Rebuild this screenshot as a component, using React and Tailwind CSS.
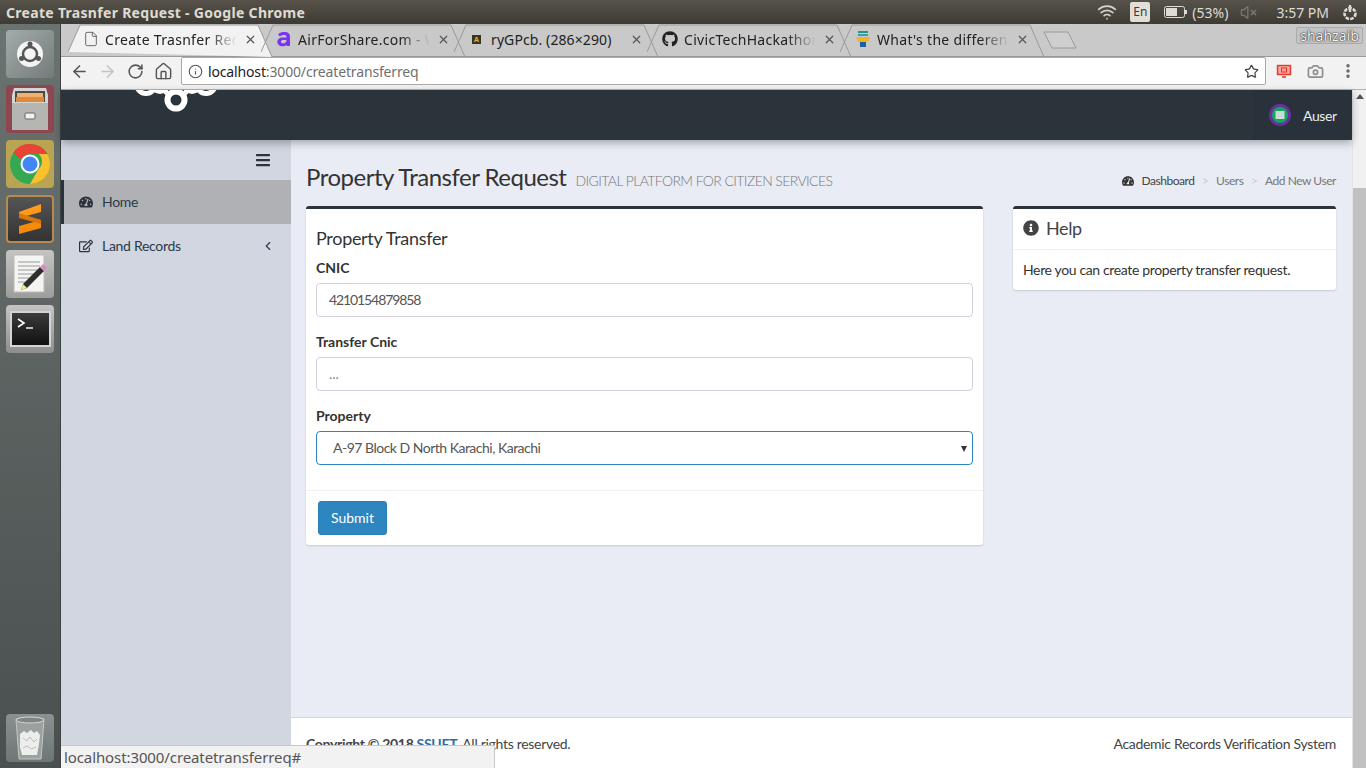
import React from 'react'
import { ArrowLeft, ArrowRight, RotateCw, Home, Info, Star, X, File, Camera, MoreVertical, Wifi, VolumeX, ChevronLeft } from 'lucide-react'
import { FaTachometerAlt, FaRegEdit, FaBars, FaInfoCircle, FaGithub } from 'react-icons/fa'

const TABS = [
  { title: 'Create Trasnfer Request', active: true, icon: 'file' },
  { title: 'AirForShare.com - Wifi', icon: 'air' },
  { title: 'ryGPcb. (286×290)', icon: 'img', full: true },
  { title: 'CivicTechHackathon', icon: 'github' },
  { title: "What's the difference", icon: 'stack' },
]

function TabIcon({ type }) {
  if (type === 'file') return <File size={16} strokeWidth={1.3} className="text-[#555]" />
  if (type === 'air') {
    return (
      <svg width="16" height="16" viewBox="0 0 16 16">
        <path d="M2 3.5C3.5 1.5 6 1 9 1c3 0 5 1.5 5 4.5V15h-3.6v-1.2C9.4 14.8 8 15.3 6.5 15.3 3.5 15.3 1.300 13.500 1.300 10.800 1.300 8 3.600 6.400 6.800 6.400h3.600V5.800c0-1.200-.8-1.800-2.200-1.800-1.500 0-3 .5-4.200 1.400zM10.400 9H7.200c-1.300 0-2.200.6-2.200 1.700 0 1 .8 1.700 2.100 1.700 1.500 0 2.600-.7 3.300-1.800z" fill="#7a35f0" />
      </svg>
    )
  }
  if (type === 'img') return <span className="ml-[3px] flex h-[9px] w-[9px] items-center justify-center bg-[#3a3520] text-[7px] leading-none font-bold text-[#e8b030]">A</span>
  if (type === 'github') return <FaGithub size={16} className="text-[#222]" />
  return (
    <svg width="16" height="18" viewBox="0 0 16 18">
      <rect x="3" y="1" width="10" height="2" fill="#2f8f8f" />
      <rect x="3" y="4" width="10" height="2" fill="#3aa0a0" />
      <path d="M1 7h14l-2 5H3z" fill="#f0b429" />
      <rect x="5" y="12" width="6" height="5" fill="#1f5f9f" />
    </svg>
  )
}

function Tab({ title, active, icon, full }) {
  return (
    <div className="relative h-full w-[193px] shrink-0">
      <svg className="absolute top-0 left-0" width="206" height="33" viewBox="0 0 206 33">
        <path
          d="M0 28 L12 1 H190 L204 33"
          fill={active ? '#f2f2f2' : 'none'}
          stroke="#9a9a9a"
          strokeWidth="1"
        />
      </svg>
      <div className="absolute top-0 left-[15px] flex h-[30px] w-[174px] items-center">
        <span className="flex w-[20px] shrink-0 justify-start"><TabIcon type={icon} /></span>
        <span
          className={
            full
              ? 'ml-[2px] w-[126px] overflow-hidden text-[14px] tracking-[0.1px] whitespace-nowrap text-[#222]'
              : 'ml-[2px] w-[132px] overflow-hidden text-[14px] tracking-[0.3px] whitespace-nowrap text-[#222] [mask-image:linear-gradient(to_right,black_78%,transparent)]'
          }
        >
          {title}
        </span>
        <X size={13} strokeWidth={2.2} className="ml-auto shrink-0 text-[#555]" />
      </div>
    </div>
  )
}

function TopBar() {
  return (
    <div className="flex h-6 shrink-0 items-center bg-gradient-to-b from-[#57534a] to-[#3d3b35] pr-[8px] pl-[6px] font-['Noto_Sans',sans-serif] text-[#dfdbd2]">
      <span className="text-[14px] font-bold tracking-[0.3px] whitespace-nowrap">Create Trasnfer Request - Google Chrome</span>
      <div className="ml-auto flex items-center">
        <Wifi size={20} strokeWidth={2} className="text-[#d8d4cb]" />
        <span className="ml-[13px] flex h-[20px] w-[20px] items-center justify-center rounded-[2px] bg-[#e2dfd8] text-[12px] text-[#3c3b37]">En</span>
        <svg className="ml-[14px]" width="24" height="12" viewBox="0 0 24 12">
          <rect x="0.5" y="0.500" width="20" height="11" rx="2" fill="none" stroke="#dfdbd2" />
          <rect x="2" y="2" width="11" height="8" fill="#dfdbd2" />
          <rect x="21" y="4" width="2" height="4" fill="#dfdbd2" />
        </svg>
        <span className="ml-[4px] text-[14px]">(53%)</span>
        <VolumeX size={17} className="ml-[12px] text-[#77756e]" />
        <span className="ml-[19px] text-[14px]">3:57 PM</span>
        <svg className="ml-[13px]" width="16" height="17" viewBox="0 0 16 17">
          <circle cx="8" cy="9.500" r="5.500" fill="none" stroke="#dfdbd2" strokeWidth="2.600" strokeDasharray="3.500 1.200" />
          <path d="M8 1v7" stroke="#dfdbd2" strokeWidth="2.400" />
        </svg>
      </div>
    </div>
  )
}

function DockTile({ className, children }) {
  return <div className={`flex h-12 w-12 shrink-0 items-center justify-center rounded-[4px] ${className}`}>{children}</div>
}

function Dock() {
  return (
    <div className="flex w-[61px] shrink-0 flex-col items-center gap-[7px] border-r border-[#3f4443] bg-gradient-to-b from-[#6b7371] to-[#4a504f] pt-[6px] pb-[6px]">
      <DockTile className="bg-gradient-to-br from-[#a4acab] to-[#737c7b]">
        <svg width="36" height="36" viewBox="0 0 36 36">
          <circle cx="18" cy="18" r="13" fill="#f4f4f4" />
          <circle cx="18" cy="18" r="7" fill="none" stroke="#555" strokeWidth="2.500" />
          <circle cx="18" cy="8" r="2.500" fill="#555" />
          <circle cx="9.500" cy="22.500" r="2.500" fill="#555" />
          <circle cx="26.500" cy="22.500" r="2.500" fill="#555" />
        </svg>
      </DockTile>
      <DockTile className="bg-[#8e4650]">
        <svg width="40" height="44" viewBox="0 0 40 44">
          <path d="M4 1H36L38 8V43H2V8z" fill="#d4d4d2" />
          <rect x="5" y="4" width="30" height="11" fill="#4a4a48" />
          <rect x="7" y="6" width="26" height="4" fill="#f0b070" />
          <rect x="6" y="10" width="28" height="5" fill="#e0883c" />
          <rect x="2" y="16" width="36" height="27" fill="#b5b5b2" />
          <rect x="15" y="26" width="10" height="6" rx="1" fill="#f2f2f2" stroke="#666" />
        </svg>
      </DockTile>
      <DockTile className="bg-[#b9a551]">
        <svg width="42" height="42" viewBox="0 0 42 42">
          <circle cx="21" cy="21" r="20" fill="#34a853" />
          <path d="M21 1a20 20 0 0 1 17.300 10H21a10 10 0 0 0-9 5.600L4.200 9.600A20 20 0 0 1 21 1z" fill="#ea4335" />
          <path d="M38.300 11A20 20 0 0 1 21 41l8.600-15A10 10 0 0 0 29.600 11z" fill="#fbc02d" />
          <circle cx="21" cy="21" r="9.500" fill="#fff" />
          <circle cx="21" cy="21" r="7.500" fill="#4285f4" />
        </svg>
      </DockTile>
      <DockTile className="border-2 border-[#b98a50] bg-gradient-to-b from-[#555] to-[#333]">
        <svg width="24" height="30" viewBox="0 0 24 30">
          <path d="M23 0v8L1 14V8z" fill="#ff9a1a" />
          <path d="M1 13l22 6v5L1 30v-8l22-6z" fill="#f58a0b" />
          <path d="M1 9l22 7v4L1 14z" fill="#d97708" />
        </svg>
      </DockTile>
      <DockTile className="bg-gradient-to-b from-[#c4c4c2] to-[#9d9d9b]">
        <svg width="38" height="40" viewBox="0 0 38 40">
          <rect x="3" y="1" width="30" height="37" fill="#f4f4f2" stroke="#bbb" />
          <path d="M7 8h22M7 12h22M7 16h20M7 20h16M7 24h13M7 28h12" stroke="#999" strokeWidth="1" />
          <path d="M12 30 L29 13 L33 17 L16 34 L10 36z" fill="#2e2e2e" />
          <path d="M29 13 L32 10 L36 14 L33 17z" fill="#d88ac4" />
          <path d="M12 30 L16 34 L10 36z" fill="#f2e88c" />
        </svg>
      </DockTile>
      <DockTile className="bg-gradient-to-b from-[#c4c4c2] to-[#8e8e8c]">
        <div className="flex h-[36px] w-[41px] items-start border-2 border-[#d4d4d4] bg-gradient-to-b from-[#3c3c3c] to-[#111] pt-[5px] pl-[5px]">
          <svg width="18" height="12" viewBox="0 0 18 12">
            <path d="M1 1l6 4-6 4" fill="none" stroke="#fff" strokeWidth="1.600" />
            <path d="M9 10h7" stroke="#fff" strokeWidth="1.400" />
          </svg>
        </div>
      </DockTile>
      <DockTile className="mt-auto bg-gradient-to-b from-[#8a9190] to-[#6e7675]">
        <svg width="32" height="44" viewBox="0 0 32 44">
          <path d="M2 3h28l-3 40H5z" fill="#9aa19f" stroke="#c4c8c6" />
          <ellipse cx="16" cy="4" rx="14" ry="3" fill="#7f8684" stroke="#d4d6d4" />
          <path d="M6 18l4-3 3 2 4-3 3 3 3-2 3 4-1 9-2 11H8L6 31z" fill="#eceeec" />
          <path d="M9 22l4 3 3-4 4 5 3-3M9 32l4-2 4 3 5-2" fill="none" stroke="#b8bcba" />
        </svg>
      </DockTile>
    </div>
  )
}

function Chrome() {
  return (
    <div className="shrink-0 font-['Noto_Sans',sans-serif]">
      <div className="relative flex h-[33px] bg-[#c9c9c9] pl-[7px]">
        <div className="absolute bottom-0 left-0 h-px w-full bg-[#9a9a9a]" />
        {TABS.map(t => <Tab key={t.icon} {...t} />)}
        <svg className="mt-[7px] ml-[10px]" width="36" height="18" viewBox="0 0 36 18">
          <path d="M1 1H25L33 17H9z" fill="#cfcfcf" stroke="#9a9a9a" />
        </svg>
        <div className="absolute top-[3px] right-[3px] flex h-[17px] w-[67px] items-center justify-center rounded-[2px] border border-[#aaa] bg-[#c4c4c4] text-[14px] leading-none text-[#f4f4f4] [text-shadow:0_0_1px_#000,0_0_2px_#333]">
          shahzaib
        </div>
      </div>
      <div className="flex h-[33px] items-center border-b border-[#b4b4b4] bg-[#f2f2f2] pb-[4px] pl-[9px]">
        <ArrowLeft size={19} strokeWidth={2} className="text-[#555]" />
        <ArrowRight size={19} strokeWidth={2} className="ml-[9px] text-[#c4c4c4]" />
        <RotateCw size={17} strokeWidth={2.200} className="ml-[10px] text-[#555]" />
        <Home size={19} strokeWidth={1.800} className="ml-[10px] text-[#555]" />
        <div className="ml-[8px] flex h-[28px] w-[1085px] items-center rounded-[2px] border border-[#a9a9a9] bg-white pr-[6px] pl-[6px]">
          <Info size={15} strokeWidth={1.800} className="text-[#555]" />
          <span className="ml-[5px] text-[14px] tracking-[-0.15px] text-[#222]">localhost<span className="text-[#6f6f6f]">:3000/createtransferreq</span></span>
          <Star size={15} strokeWidth={2} className="ml-auto text-[#444]" />
        </div>
        <svg className="ml-[10px]" width="16" height="16" viewBox="0 0 16 16">
          <rect x="1.500" y="2.500" width="13" height="9" fill="#f6a49c" stroke="#e5392c" strokeWidth="1.400" />
          <rect x="5.500" y="5" width="5" height="4" fill="none" stroke="#e5392c" />
          <path d="M6 14h4" stroke="#e5392c" strokeWidth="1.600" />
        </svg>
        <Camera size={17} strokeWidth={2.400} className="ml-[15px] text-[#8e8e8e]" />
        <MoreVertical size={18} strokeWidth={2.600} className="ml-[15px] text-[#666]" />
      </div>
    </div>
  )
}

function Header() {
  return (
    <div className="relative z-10 flex h-[50px] shrink-0 overflow-hidden bg-[#2b343b] shadow-[0_3px_8px_rgba(0,0,0,0.3)]">
      <svg className="absolute top-0 left-[72px]" width="88" height="26" viewBox="0 0 88 26">
        <g fill="none" stroke="#fff">
          <circle cx="43" cy="10" r="8.500" strokeWidth="6" />
          <path d="M36 5 L29 -2 M50 5 L57 -2" strokeWidth="5" />
          <circle cx="13" cy="-6" r="9.500" strokeWidth="5" />
          <circle cx="27" cy="-6" r="7.500" strokeWidth="5" />
          <circle cx="59" cy="-6" r="7.500" strokeWidth="5" />
          <circle cx="73" cy="-6" r="9.500" strokeWidth="5" />
        </g>
      </svg>
      <div className="ml-auto flex w-[99px] items-center bg-[#29323a] pl-[15px]">
        <svg width="24" height="24" viewBox="0 0 24 24">
          <circle cx="12" cy="12" r="11" fill="#6b2fa0" />
          <circle cx="12" cy="12" r="8" fill="#12a75a" />
          <rect x="7.500" y="8" width="9" height="8" fill="#c9dcd6" />
        </svg>
        <span className="ml-[11px] text-[14px] tracking-[-0.4px] text-[#e4edf3]">Auser</span>
      </div>
    </div>
  )
}

function Sidebar() {
  return (
    <div className="flex w-[230px] shrink-0 flex-col bg-[#d2d6e0] font-['Lato',sans-serif] text-[#2b3a4a]">
      <div className="flex h-[40px] items-center justify-end pr-[20px]">
        <FaBars size={16} className="text-[#2b343b]" />
      </div>
      <div className="flex h-[44px] items-center border-l-[3px] border-[#2b343b] bg-[#b0b1b5] pb-[1px] pl-[15px] text-[14px] tracking-[-0.3px]">
        <FaTachometerAlt size={14} className="text-[#2b343b]" />
        <span className="ml-[9px]">Home</span>
      </div>
      <div className="flex h-[44px] items-center pr-[16px] pb-[1px] pl-[18px] text-[14px] tracking-[-0.3px]">
        <FaRegEdit size={14} className="text-[#2b343b]" />
        <span className="ml-[9px]">Land Records</span>
        <ChevronLeft size={14} strokeWidth={2} className="ml-auto" />
      </div>
    </div>
  )
}

function Field({ label, value, placeholder, focus, valueClass }) {
  return (
    <div className="mb-[15px]">
      <div className="mb-[5px] text-[14px] leading-[20px] font-bold tracking-normal text-[#333]">{label}</div>
      <div
        className={
          focus
            ? 'relative flex h-[34px] items-center rounded-[4px] border border-[#2e86c1] bg-white pb-[1px] pl-[16px] text-[14px] text-[#555]'
            : 'relative flex h-[34px] items-center rounded-[4px] border border-[#d2d0dc] bg-white pb-[1px] pl-[12px] text-[14px] text-[#555]'
        }
      >
        {placeholder ? <span className="text-[#888]">{placeholder}</span> : <span className={valueClass}>{value}</span>}
        {focus && <span className="absolute top-[14px] right-[5px] h-0 w-0 border-x-[3px] border-t-[6px] border-x-transparent border-t-[#333]" />}
      </div>
    </div>
  )
}

function Main() {
  return (
    <div className="flex min-w-0 flex-1 flex-col bg-[#e9ecf4] font-['Lato',sans-serif]">
      <div className="flex-1 pr-[16px] pl-[15px]">
        <div className="flex h-[66px] items-end justify-between pb-[14px]">
          <div className="flex items-baseline">
            <span className="text-[24px] leading-[30px] tracking-[-0.5px] text-[#333]">Property Transfer Request</span>
            <span className="ml-[9px] text-[14px] font-light tracking-[-0.6px] text-[#777]">DIGITAL PLATFORM FOR CITIZEN SERVICES</span>
          </div>
          <div className="flex items-center pb-[2px] text-[12px] tracking-[-0.45px] text-[#777]">
            <FaTachometerAlt size={12} className="text-[#333]" />
            <span className="ml-[7px] text-[#444]">Dashboard</span>
            <span className="mx-[7.5px] text-[#ccc]">&gt;</span>
            <span>Users</span>
            <span className="mx-[7.5px] text-[#ccc]">&gt;</span>
            <span>Add New User</span>
          </div>
        </div>
        <div className="flex items-start gap-[30px]">
          <div className="w-[677px] rounded-[3px] border-t-[3px] border-[#2b343b] bg-white shadow-[0_1px_2px_rgba(0,0,0,0.15)]">
            <div className="px-[10px] pt-[19px] pb-[10px]">
              <div className="mb-[10px] text-[18px] leading-[20px] tracking-[-0.3px] text-[#333]">Property Transfer</div>
              <Field label="CNIC" value="4210154879858" valueClass="tracking-[-1.1px]" />
              <Field label="Transfer Cnic" placeholder="..." />
              <Field label="Property" value="A-97 Block D North Karachi, Karachi" valueClass="tracking-[-0.5px]" focus />
            </div>
            <div className="border-t border-[#f0f0f0] px-[12px] pt-[10px] pb-[10px]">
              <button className="h-[34px] w-[69px] rounded-[3px] border border-[#2b7fb5] bg-[#2e86c1] pb-[1px] text-[14px] text-white">Submit</button>
            </div>
          </div>
          <div className="flex-1 rounded-[3px] border-t-[3px] border-[#2b343b] bg-white shadow-[0_1px_2px_rgba(0,0,0,0.15)]">
            <div className="flex h-[41px] items-center border-b border-[#f0f0f0] pb-[2px] pl-[10px] text-[18px] tracking-[-0.4px] text-[#444]">
              <FaInfoCircle size={16} className="text-[#444]" />
              <span className="ml-[7px]">Help</span>
            </div>
            <div className="flex h-[40px] items-center pb-[2px] pl-[10px] text-[14px] tracking-[-0.36px] text-[#333]">Here you can create property transfer request.</div>
          </div>
        </div>
      </div>
      <div className="flex h-[51px] shrink-0 items-center justify-between border-t border-[#d2d6e0] bg-white pt-[1px] pr-[16px] pl-[15px] text-[14px] tracking-[-0.3px] text-[#444]">
        <span><b>Copyright © 2018 <span className="text-[#2e6da4]">SSUET</span>.</b> All rights reserved.</span>
        <span>Academic Records Verification System</span>
      </div>
    </div>
  )
}

export default function App() {
  return (
    <div className="relative flex h-[768px] w-[1366px] flex-col overflow-hidden font-['Lato',sans-serif]">
      <TopBar />
      <div className="flex min-h-0 flex-1">
        <Dock />
        <div className="flex min-w-0 flex-1 flex-col">
          <Chrome />
          <div className="flex min-h-0 flex-1">
            <div className="flex min-w-0 flex-1 flex-col">
              <Header />
              <div className="flex min-h-0 flex-1">
                <Sidebar />
                <Main />
              </div>
            </div>
            <div className="flex w-[14px] shrink-0 flex-col border-l border-[#e4e4e4] bg-[#f1f1f1]">
              <div className="flex h-[98px] justify-center pt-[4px]">
                <span className="h-0 w-0 border-x-[4px] border-b-[5px] border-x-transparent border-b-[#555]" />
              </div>
              <div className="flex-1 bg-[#c1c1c1]" />
            </div>
          </div>
        </div>
      </div>
      <div className="absolute bottom-0 left-[61px] flex h-[23px] w-[434px] items-center rounded-tr-[2px] border-t border-r border-[#c8c8c8] bg-[#f2f2f2] pl-[3px] font-['Noto_Sans',sans-serif] text-[15px] tracking-[-0.1px] text-[#555]">
        localhost:3000/createtransferreq#
      </div>
    </div>
  )
}
